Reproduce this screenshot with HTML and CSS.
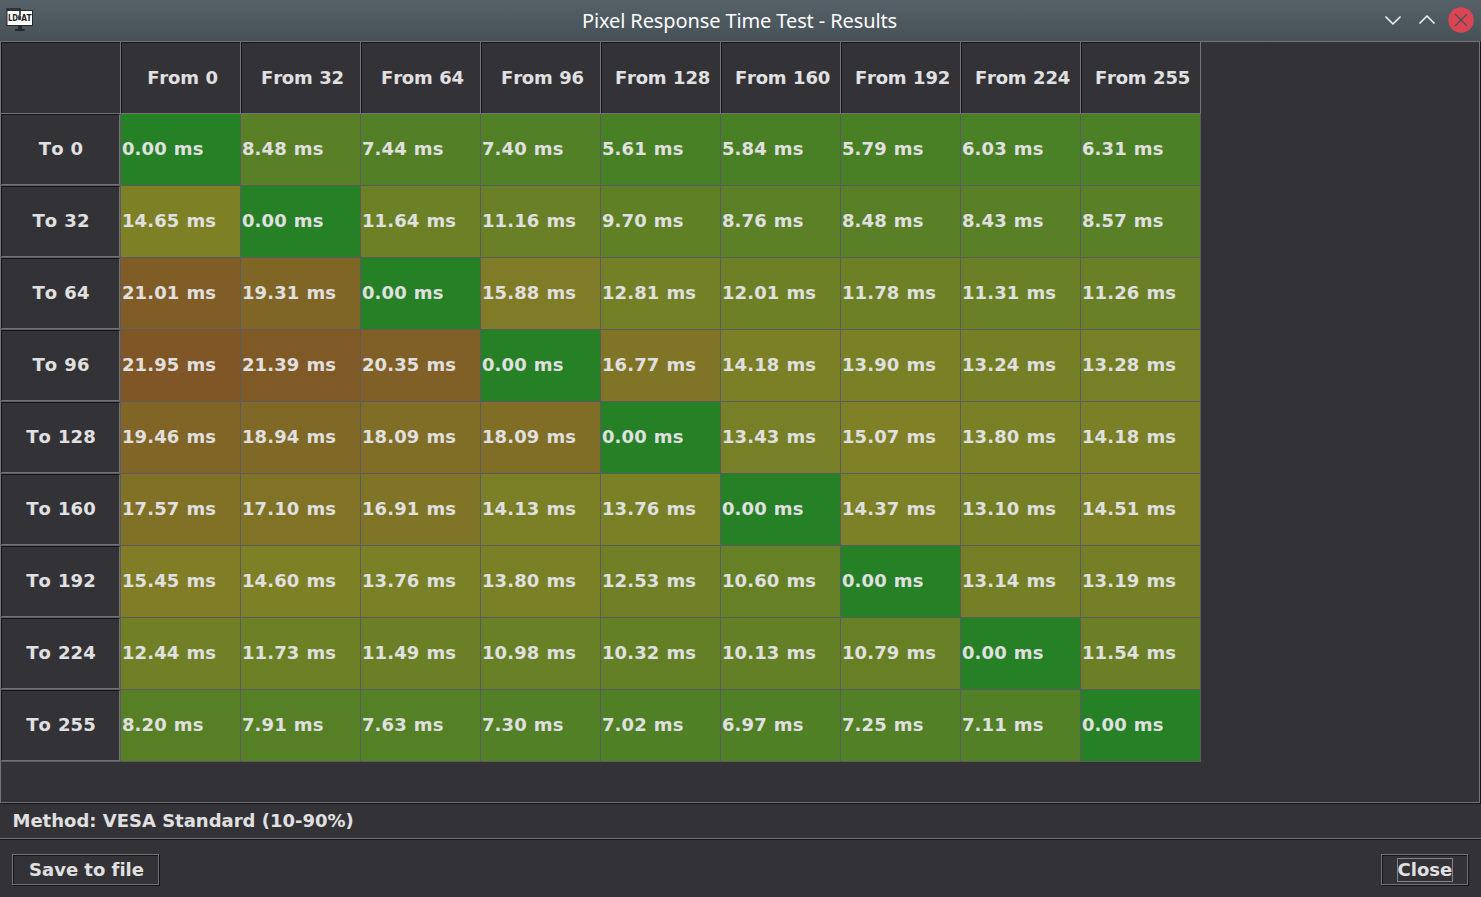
FILE: index.html
```html
<!DOCTYPE html>
<html lang="en">
<head>
<meta charset="utf-8">
<title>Pixel Response Time Test - Results</title>
<link rel="stylesheet" href="styles.css">
</head>
<body>
<div class="window">
  <header class="titlebar">
    <svg class="logo" width="40" height="40" viewBox="0 0 40 40">
      <rect x="7" y="10.500" width="25.500" height="15" fill="#fff" stroke="#25282b"/>
      <path d="M6 9h14v6" fill="none" stroke="#25282b" stroke-width="1.600"/>
      <text x="8" y="21" textLength="10" lengthAdjust="spacingAndGlyphs" class="logo-text">LD</text>
      <ellipse cx="19.500" cy="17.500" rx="1.800" ry="2.800" fill="#404346"/>
      <text x="21.300" y="21" textLength="10.200" lengthAdjust="spacingAndGlyphs" class="logo-text">AT</text>
      <path d="M18 26h4v3h2.500v2h-9.500v-2h3z" fill="#25282b"/>
    </svg>
    <h1 class="title">Pixel Response Time Test - Results</h1>
    <svg class="controls" width="101" height="40" viewBox="0 0 101 40">
      <path d="M5.500 16.500l7.500 7.500 7.500-7.500M39.500 23.500l7.500-7.500 7.500 7.500" fill="none" stroke="#fcfcfc" stroke-width="1.5"/>
      <circle cx="81" cy="20" r="12.700" fill="#da4453"/>
      <path d="M75 14l12 12M87 14l-12 12" stroke="#4a5359" stroke-width="1.4"/>
    </svg>
  </header>
  <main class="results"><div class="grid" id="grid"></div></main>
  <p class="method"><span>Method: VESA Standard (10-90%)</span></p>
  <footer class="actions">
    <button class="button save"><span>Save to file</span></button>
    <button class="button close"><span class="focus">Close</span></button>
  </footer>
</div>
<script src="grid.js"></script>
</body>
</html>
```
FILE: styles.css
```css
* { box-sizing: border-box; }
body { margin: 0; background: #333237; color: #e0e0e0; font: bold 18px "DejaVu Sans", sans-serif; font-kerning: none; font-variant-ligatures: none; }
.window { width: 1481px; height: 897px; display: flex; flex-direction: column; overflow: hidden; }
.titlebar { height: 41px; flex: none; display: grid; grid-template-columns: 101px 1fr 101px; background: linear-gradient(#566168, #475057); }
.title { margin: 0; padding-right: 2px; text-align: center; font: 20px/41px "Noto Sans", sans-serif; letter-spacing: -.11px; color: #fcfcfc; white-space: nowrap; }
.logo-text { font: bold 8px "DejaVu Sans", sans-serif; fill: #222; }
.results { height: 762px; flex: none; width: 1480px; border: 1px solid #737276; box-shadow: 1px 1px 0 #15141b; }
.grid { width: 1200px; display: grid; grid-template-columns: repeat(10, 120px); grid-auto-rows: 72px; }
.cell { display: flex; align-items: center; padding: 0 0 2px 1px; border-right: 1px solid #5c5b60; border-bottom: 1px solid #5c5b60; white-space: nowrap; letter-spacing: .1px; word-spacing: .6px; }
.col { justify-content: center; padding: 0 0 1px 4px; border-color: #737276; box-shadow: inset 1px 1px 0 #15141b; letter-spacing: -.2px; }
.row { padding: 0; }
.row-box { width: 100%; height: 100%; display: flex; align-items: center; justify-content: center; padding: 0 0 2px 1px; border: 1px solid; border-color: #15141b #737276 #737276 #15141b; }
.method { margin: 0; height: 37px; flex: none; padding: 0 0 1px 12.5px; display: flex; align-items: center; border-bottom: 1px solid #15141b; box-shadow: inset 0 -1px 0 #737276; }
.actions { display: flex; justify-content: space-between; padding: 14px 13px 0 12px; }
.button { height: 31px; padding: 0; background: none; border: 1px solid #737276; box-shadow: 1px 1px 0 #15141b, inset 1px 1px 0 #15141b; color: inherit; font: inherit; font-kerning: none; font-variant-ligatures: none; display: flex; align-items: center; justify-content: center; }
.save { width: 147px; padding-left: 2px; }
.close { width: 87px; }
.focus { width: 56px; height: 24px; border: 1px solid #838287; line-height: 22px; white-space: nowrap; }
```
FILE: grid.js
```js
const levels = [0, 32, 64, 96, 128, 160, 192, 224, 255];
const times = [
  "0.00 8.48 7.44 7.40 5.61 5.84 5.79 6.03 6.31",
  "14.65 0.00 11.64 11.16 9.70 8.76 8.48 8.43 8.57",
  "21.01 19.31 0.00 15.88 12.81 12.01 11.78 11.31 11.26",
  "21.95 21.39 20.35 0.00 16.77 14.18 13.90 13.24 13.28",
  "19.46 18.94 18.09 18.09 0.00 13.43 15.07 13.80 14.18",
  "17.57 17.10 16.91 14.13 13.76 0.00 14.37 13.10 14.51",
  "15.45 14.60 13.76 13.80 12.53 10.60 0.00 13.14 13.19",
  "12.44 11.73 11.49 10.98 10.32 10.13 10.79 0.00 11.54",
  "8.20 7.91 7.63 7.30 7.02 6.97 7.25 7.11 0.00",
].map(line => line.split(" "));

// Green at 0 ms, yellow at 15 ms, red at 30 ms.
function heat(ms) {
  const r = Math.round(38 + 90 * Math.min(ms / 15, 1));
  const g = Math.round(128 - 90 * Math.max(ms / 15 - 1, 0));
  return `rgb(${r}, ${g}, 38)`;
}

let html = '<div class="cell col"></div>';
levels.forEach(l => { html += `<div class="cell col">From ${l}</div>`; });
times.forEach((row, i) => {
  html += `<div class="cell row"><div class="row-box">To ${levels[i]}</div></div>`;
  row.forEach(t => { html += `<div class="cell" style="background:${heat(+t)}">${t} ms</div>`; });
});
document.getElementById("grid").innerHTML = html;
```
